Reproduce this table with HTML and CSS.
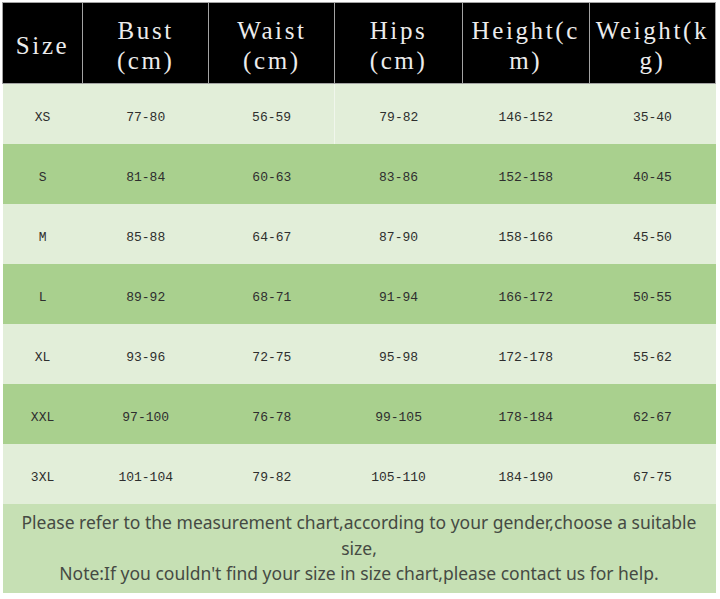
FILE: index.html
```html
<!DOCTYPE html>
<html>
<head>
<meta charset="utf-8">
<link rel="stylesheet" href="styles.css">
</head>
<body>
<table class="chart">
  <colgroup>
    <col class="c-size"><col class="c-mid"><col class="c-mid"><col class="c-wide"><col class="c-wide"><col class="c-mid">
  </colgroup>
  <thead>
    <tr>
      <th class="one">Size</th>
      <th>Bust<br>(cm)</th>
      <th>Waist<br>(cm)</th>
      <th>Hips<br>(cm)</th>
      <th>Height(c<br>m)</th>
      <th>Weight(k<br>g)</th>
    </tr>
  </thead>
  <tbody>
    <tr class="light"><td>XS</td><td>77-80</td><td>56-59</td><td class="sep">79-82</td><td>146-152</td><td>35-40</td></tr>
    <tr class="dark"><td>S</td><td>81-84</td><td>60-63</td><td>83-86</td><td>152-158</td><td>40-45</td></tr>
    <tr class="light"><td>M</td><td>85-88</td><td>64-67</td><td>87-90</td><td>158-166</td><td>45-50</td></tr>
    <tr class="dark"><td>L</td><td>89-92</td><td>68-71</td><td>91-94</td><td>166-172</td><td>50-55</td></tr>
    <tr class="light"><td>XL</td><td>93-96</td><td>72-75</td><td>95-98</td><td>172-178</td><td>55-62</td></tr>
    <tr class="dark"><td>XXL</td><td>97-100</td><td>76-78</td><td>99-105</td><td>178-184</td><td>62-67</td></tr>
    <tr class="light"><td>3XL</td><td>101-104</td><td>79-82</td><td>105-110</td><td>184-190</td><td>67-75</td></tr>
    <tr class="note"><td colspan="6">Please refer to the measurement chart,according to your gender,choose a suitable<br>size,<br>Note:If you couldn't find your size in size chart,please contact us for help.</td></tr>
  </tbody>
</table>
</body>
</html>
```

FILE: styles.css
```css
html, body {
  margin: 0;
  padding: 0;
  background: #ffffff;
}

.chart {
  margin: 2px 0 0 2px;
  width: 714px;
  border-collapse: collapse;
  table-layout: fixed;
}

.c-size { width: 80px; }
.c-mid { width: 126px; }
.c-wide { width: 127px; }

.chart th {
  height: 74px;
  padding: 6px 0 0 0;
  background: #000000;
  color: #ececec;
  border: 1px solid #a3a3a3;
  font-family: "Liberation Serif", "DejaVu Serif", serif;
  font-weight: normal;
  font-size: 25px;
  letter-spacing: 2.6px;
  line-height: 30px;
  text-align: center;
  vertical-align: middle;
}

.chart td {
  height: 54px;
  padding: 6px 0 0 0;
  font-family: "Liberation Mono", "DejaVu Sans Mono", monospace;
  font-size: 13px;
  color: #2e2e2e;
  text-align: center;
  vertical-align: middle;
}

.chart tr.light td {
  background: #e2eed9;
}

.chart tr.dark td {
  background: #a9d08e;
}

.chart tr.light td.sep {
  border-left: 1px solid #f0f6ec;
}

.chart tr.note td {
  height: 89px;
  padding: 0;
  background: #c6e0b4;
  font-family: "Noto Sans", "Open Sans", sans-serif;
  font-size: 17.5px;
  line-height: 25.5px;
  color: #454a43;
}
```
